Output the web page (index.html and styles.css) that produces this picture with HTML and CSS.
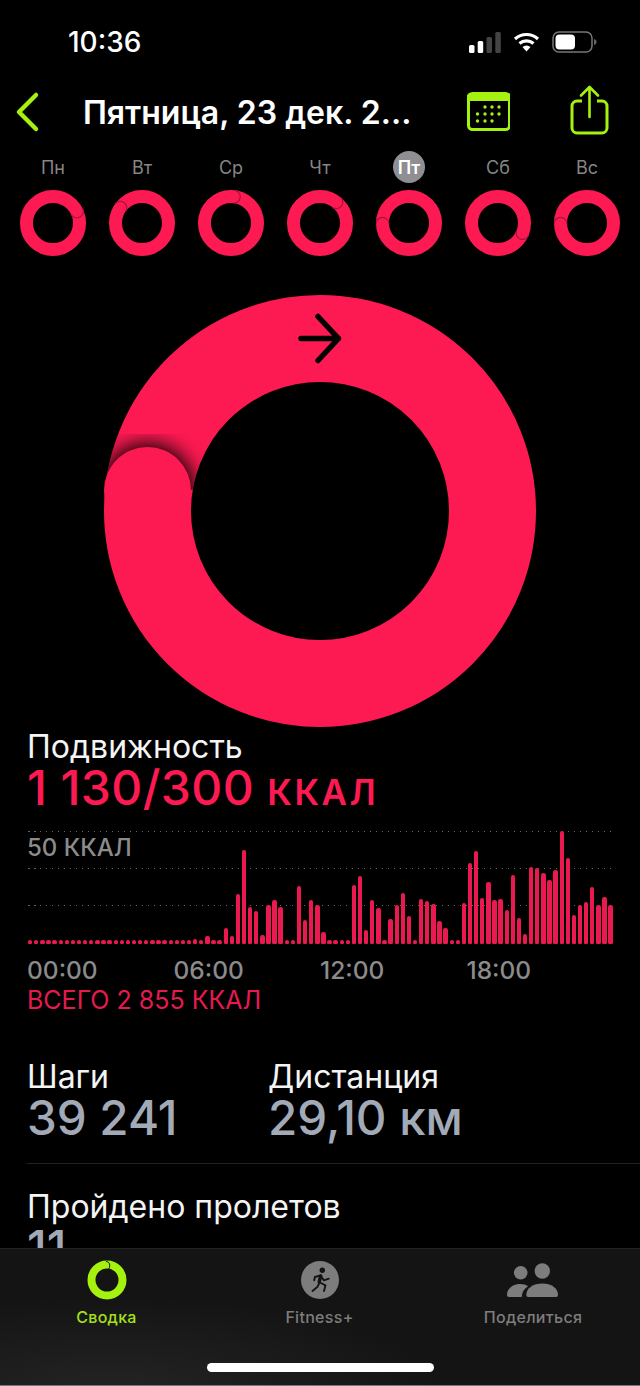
FILE: index.html
```html
<!DOCTYPE html>
<html lang="ru">
<head>
<meta charset="utf-8">
<title>Активность</title>
<link rel="stylesheet" href="styles.css">
</head>
<body>
<div class="screen">
  <header class="status">
    <span class="clock">10:36</span>
    <div class="status-icons">
      <svg width="32" height="21" viewBox="0 0 32 21"><rect x="0" y="13" width="5.500" height="8" rx="1.500" fill="#fff"/><rect x="8.700" y="9" width="5.500" height="12" rx="1.500" fill="#fff"/><rect x="17.500" y="5" width="5.500" height="16" rx="1.500" fill="#444"/><rect x="26.300" y="0" width="5.500" height="21" rx="1.500" fill="#444"/></svg>
      <svg width="27" height="20" viewBox="0 0 27 20"><path d="M13.500 19.500L9.500 15a6 6 0 0 1 8 0z" fill="#fff"/><path d="M6.500 11.500a10.500 10.500 0 0 1 14 0" fill="none" stroke="#fff" stroke-width="3.200"/><path d="M2 7a17 17 0 0 1 23 0" fill="none" stroke="#fff" stroke-width="3.200"/></svg>
      <svg width="45" height="22" viewBox="0 0 45 22"><rect x="1" y="1" width="39" height="20" rx="6" fill="none" stroke="#777" stroke-width="1.500"/><rect x="3.500" y="3.500" width="19.500" height="15" rx="4" fill="#fff"/><path d="M42 8c1.800.5 2.500 1.700 2.500 3s-.7 2.500-2.500 3z" fill="#666"/></svg>
    </div>
  </header>

  <nav class="nav">
    <svg class="back" width="26" height="42" viewBox="0 0 26 42"><path d="M21 4L4 21l17 17" fill="none" stroke="#a5f20f" stroke-width="4.500" stroke-linecap="round" stroke-linejoin="round"/></svg>
    <h1 class="title">Пятница, 23 дек. 2...</h1>
    <svg class="cal" width="44" height="40" viewBox="0 0 44 40"><rect x="2.500" y="1.500" width="41" height="36" rx="4" fill="none" stroke="#a5f20f" stroke-width="3"/><path d="M1 9V5a4 4 0 0 1 4-4h36a4 4 0 0 1 4 4v4z" fill="#a5f20f"/><g fill="#a5f20f"><circle cx="19" cy="15" r="1.700"/><circle cx="26" cy="15" r="1.700"/><circle cx="33" cy="15" r="1.700"/><circle cx="11.500" cy="22" r="1.700"/><circle cx="19" cy="22" r="1.700"/><circle cx="26" cy="22" r="1.700"/><circle cx="33" cy="22" r="1.700"/><circle cx="11.500" cy="29" r="1.700"/><circle cx="19" cy="29" r="1.700"/><circle cx="26" cy="29" r="1.700"/></g></svg>
    <svg class="share" width="40" height="50" viewBox="0 0 40 50"><path d="M12 16H7a5 5 0 0 0-5 5v22a5 5 0 0 0 5 5h25a5 5 0 0 0 5-5V21a5 5 0 0 0-5-5h-5" fill="none" stroke="#a5f20f" stroke-width="3"/><path d="M19.500 32V3M11 10.500L19.500 2 28 10.500" fill="none" stroke="#a5f20f" stroke-width="2.600" stroke-linecap="round" stroke-linejoin="round"/></svg>
  </nav>

  <section class="week">
    <div class="day"><span class="day-label">Пн</span><svg class="mini" width="66" height="66" viewBox="-33 -33 66 66"><circle class="mini-track" r="26.500"/><g transform="rotate(64)"><path class="mini-edge" d="M0-33a6.500 6.500 0 0 1 0 13"/></g></svg></div>
    <div class="day"><span class="day-label">Вт</span><svg class="mini" width="66" height="66" viewBox="-33 -33 66 66"><circle class="mini-track" r="26.500"/><g transform="rotate(-55)"><path class="mini-edge" d="M0-33a6.500 6.500 0 0 1 0 13"/></g></svg></div>
    <div class="day"><span class="day-label">Ср</span><svg class="mini" width="66" height="66" viewBox="-33 -33 66 66"><circle class="mini-track" r="26.500"/><g transform="rotate(6)"><path class="mini-edge" d="M0-33a6.500 6.500 0 0 1 0 13"/></g></svg></div>
    <div class="day"><span class="day-label">Чт</span><svg class="mini" width="66" height="66" viewBox="-33 -33 66 66"><circle class="mini-track" r="26.500"/><g transform="rotate(38)"><path class="mini-edge" d="M0-33a6.500 6.500 0 0 1 0 13"/></g></svg></div>
    <div class="day"><span class="day-label today">Пт</span><svg class="mini" width="66" height="66" viewBox="-33 -33 66 66"><circle class="mini-track" r="26.500"/><g transform="rotate(-92)"><path class="mini-edge" d="M0-33a6.500 6.500 0 0 1 0 13"/></g></svg></div>
    <div class="day"><span class="day-label">Сб</span><svg class="mini" width="66" height="66" viewBox="-33 -33 66 66"><circle class="mini-track" r="26.500"/><g transform="rotate(112)"><path class="mini-edge" d="M0-33a6.500 6.500 0 0 1 0 13"/></g></svg></div>
    <div class="day"><span class="day-label">Вс</span><svg class="mini" width="66" height="66" viewBox="-33 -33 66 66"><circle class="mini-track" r="26.500"/><g transform="rotate(-92)"><path class="mini-edge" d="M0-33a6.500 6.500 0 0 1 0 13"/></g></svg></div>
  </section>

  <section class="big-ring">
    <svg width="432" height="432" viewBox="-216 -216 432 432">
      <defs>
        <filter id="soft" x="-50%" y="-50%" width="200%" height="200%"><feGaussianBlur stdDeviation="10"/></filter>
        <mask id="ringmask"><circle r="172.500" fill="none" stroke="#fff" stroke-width="87"/></mask>
        <clipPath id="above"><rect x="-216" y="-120" width="100" height="99"/></clipPath>
      </defs>
      <circle class="big-track" r="172.500"/>
      <g mask="url(#ringmask)"><g clip-path="url(#above)">
        <circle cx="-172.500" cy="-20.500" r="47" fill="#000" filter="url(#soft)"/>
      </g></g>
      <circle class="big-head" cx="-172.500" cy="-20.500" r="43.500"/>
      <path class="big-arrow" d="M-19-172.500H18.500M-2-194.500L18.500-172.500-2-150.500"/>
    </svg>
  </section>

  <section class="move">
    <div class="label">Подвижность</div>
    <div class="move-value">1 130/300 <span class="unit">ККАЛ</span></div>
  </section>

  <section class="chart">
    <div class="grid"><i></i><i></i><i></i></div>
    <div class="chart-label">50 ККАЛ</div>
    <div class="bars">
      <b style="height:4px"></b><b style="height:4px"></b><b style="height:4px"></b><b style="height:4px"></b><b style="height:4px"></b><b style="height:4px"></b><b style="height:4px"></b><b style="height:4px"></b><b style="height:4px"></b><b style="height:4px"></b><b style="height:4px"></b><b style="height:4px"></b><b style="height:4px"></b><b style="height:4px"></b><b style="height:4px"></b><b style="height:4px"></b><b style="height:4px"></b><b style="height:4px"></b><b style="height:4px"></b><b style="height:4px"></b><b style="height:4px"></b><b style="height:4px"></b><b style="height:4px"></b><b style="height:4px"></b><b style="height:4px"></b><b style="height:4px"></b><b style="height:4px"></b><b style="height:5px"></b><b style="height:4px"></b><b style="height:8px"></b><b style="height:4px"></b><b style="height:4px"></b><b style="height:16px"></b><b style="height:8px"></b><b style="height:50px"></b><b style="height:94px"></b><b style="height:37px"></b><b style="height:33px"></b><b style="height:9px"></b><b style="height:39px"></b><b style="height:44px"></b><b style="height:37px"></b><b style="height:4px"></b><b style="height:4px"></b><b style="height:58px"></b><b style="height:24px"></b><b style="height:44px"></b><b style="height:39px"></b><b style="height:12px"></b><b style="height:4px"></b><b style="height:4px"></b><b style="height:4px"></b><b style="height:4px"></b><b style="height:59px"></b><b style="height:68px"></b><b style="height:14px"></b><b style="height:44px"></b><b style="height:36px"></b><b style="height:4px"></b><b style="height:25px"></b><b style="height:39px"></b><b style="height:51px"></b><b style="height:28px"></b><b style="height:4px"></b><b style="height:45px"></b><b style="height:43px"></b><b style="height:40px"></b><b style="height:23px"></b><b style="height:16px"></b><b style="height:4px"></b><b style="height:4px"></b><b style="height:41px"></b><b style="height:81px"></b><b style="height:93px"></b><b style="height:46px"></b><b style="height:62px"></b><b style="height:44px"></b><b style="height:45px"></b><b style="height:34px"></b><b style="height:69px"></b><b style="height:26px"></b><b style="height:10px"></b><b style="height:77px"></b><b style="height:76px"></b><b style="height:71px"></b><b style="height:64px"></b><b style="height:74px"></b><b style="height:113px"></b><b style="height:86px"></b><b style="height:29px"></b><b style="height:39px"></b><b style="height:42px"></b><b style="height:57px"></b><b style="height:39px"></b><b style="height:47px"></b><b style="height:39px"></b>
    </div>
    <div class="hours"><span>00:00</span><span>06:00</span><span>12:00</span><span>18:00</span></div>
    <div class="total">ВСЕГО 2 855 ККАЛ</div>
  </section>

  <section class="stats">
    <div class="stat"><div class="label">Шаги</div><div class="stat-value">39 241</div></div>
    <div class="stat"><div class="label">Дистанция</div><div class="stat-value">29,10 км</div></div>
  </section>

  <section class="flights">
    <div class="label">Пройдено пролетов</div>
    <div class="stat-value">11</div>
  </section>

  <footer class="tabbar">
    <div class="tabs">
      <div class="tab tab-on">
        <svg width="40" height="40" viewBox="0 0 40 40"><circle cx="20" cy="20" r="15.500" fill="none" stroke="#a5f20f" stroke-width="8"/><path d="M19 1.500a3.500 4 0 0 1 0 8.500" fill="none" stroke="#141414" stroke-width="1"/></svg>
        <span>Сводка</span>
      </div>
      <div class="tab">
        <svg width="40" height="40" viewBox="-1 -1 40 40"><circle cx="19" cy="19" r="19" fill="#7d7d7d"/><g fill="none" stroke="#141414" stroke-linecap="round" stroke-linejoin="round"><path stroke-width="3.400" d="M19.700 15L18.200 21"/><path stroke-width="1.900" d="M19.700 14.300L13.900 16 13.200 19.300M19.700 15L23 19.300 27.800 17.700M18 21L24.500 24.300 23 30M18 22.700L16.300 26 11.500 30"/></g><circle cx="21.300" cy="9.300" r="2.700" fill="#141414"/></svg>
        <span>Fitness+</span>
      </div>
      <div class="tab">
        <svg width="52" height="40" viewBox="0 -3 52 40"><g fill="#7d7d7d"><circle cx="13.700" cy="9.700" r="6.800"/><circle cx="35.300" cy="8" r="7.700"/><path d="M0 32c0-6.500 6-11 13-11 3.500 0 6 .8 8 2.300-4 2.700-6 6-6.300 10.700H2c-1.200 0-2-.8-2-2z"/><path d="M19.300 32c0-7 7-11.500 16-11.500S51 25 51 32c0 1.200-.8 2-2 2H21.300c-1.200 0-2-.8-2-2z"/></g></svg>
        <span>Поделиться</span>
      </div>
    </div>
    <div class="home"></div>
  </footer>
</div>
</body>
</html>
```
FILE: styles.css
```css
* { box-sizing: border-box; margin: 0; padding: 0; }
html, body { background: #000; }
body { width: 640px; height: 1386px; overflow: hidden; font-family: Inter, "Liberation Sans", sans-serif; color: #fff; }
.screen { position: relative; width: 640px; height: 1386px; overflow: hidden; background: #000; }

.status { height: 84px; display: flex; justify-content: space-between; align-items: center; padding: 0 43px 0 68px; }
.clock { font-size: 28px; font-weight: 500; }
.status-icons { display: flex; align-items: center; gap: 12px; }

.nav { height: 56px; display: flex; align-items: center; padding-left: 15px; }
.back { flex: none; }
.title { flex: none; width: 383px; margin-left: 42px; font-size: 32px; font-weight: 600; white-space: nowrap; }
.cal { flex: none; }
.share { flex: none; margin-left: 60px; margin-top: -4px; }

.week { display: flex; padding: 11px 0 0 20px; gap: 23px; height: 124px; }
.day { width: 66px; display: flex; flex-direction: column; align-items: center; }
.day-label { width: 32px; height: 32px; border-radius: 50%; display: flex; align-items: center; justify-content: center; font-size: 18px; color: #858585; }
.today { background: #8e8e93; color: #fff; font-weight: 600; }
.mini { margin-top: 7px; display: block; }
.mini-track { fill: none; stroke: #fd1a52; stroke-width: 13; }
.mini-edge { fill: none; stroke: #a8123c; stroke-width: 1.200; }

.big-ring { display: flex; justify-content: center; height: 432px; margin-top: 31px; }
.big-track { fill: none; stroke: #fd1a52; stroke-width: 87; }
.big-head { fill: #fd1a52; }
.big-arrow { fill: none; stroke: #000; stroke-width: 5.500; stroke-linecap: round; stroke-linejoin: round; }

.move { padding: 1px 27px 0; }
.label { font-size: 32px; line-height: 38px; color: #f4f4f4; white-space: nowrap; }
.move-value { font-size: 48px; line-height: 44px; font-weight: 500; letter-spacing: .4px; color: #fd1a52; white-space: nowrap; }
.unit { font-size: 35px; line-height: 1; font-weight: 600; letter-spacing: 2.500px; }

.chart { position: relative; margin: 9px 28px 0; width: 584px; height: 200px; }
.grid { position: absolute; left: 0; right: 0; top: 12px; display: flex; flex-direction: column; gap: 36px; }
.grid i { display: block; height: 1px; background: repeating-linear-gradient(90deg, #666 0 1.500px, transparent 1.500px 6px); }
.chart-label { position: absolute; left: -1px; top: 16px; font-size: 24px; font-weight: 500; line-height: 26px; color: #8b8b8b; }
.bars { position: absolute; left: 0; right: 0; top: 12px; height: 113px; display: flex; align-items: flex-end; gap: 1.750px; }
.bars b { flex: 1 1 0; border-radius: 2.200px 2.200px 1.500px 1.500px; background: #ea1a50; }
.hours { position: absolute; left: -1px; top: 136px; width: 600px; display: grid; grid-template-columns: repeat(4, 146.500px); font-size: 24.500px; line-height: 30px; font-weight: 500; color: #8b8b8b; }
.total { position: absolute; left: -1px; top: 166px; font-size: 25px; line-height: 30px; color: #e71a50; white-space: nowrap; }

.stats { display: flex; padding-left: 27px; margin-top: 39px; height: 105px; }
.stat { width: 241px; }
.stat-value { font-size: 47.500px; line-height: 44px; font-weight: 500; color: #a3aab7; white-space: nowrap; }

.flights { margin-left: 27px; border-top: 1px solid #222; padding-top: 24px; }

.tabbar { position: absolute; left: 0; right: 0; bottom: 0; height: 138px; background: radial-gradient(ellipse 340px 90px at 110px 138px, #232323, #141414); border-top: 1px solid #222; border-bottom: 1px solid #777; }
.tabs { display: grid; grid-template-columns: 213px 213px 214px; padding-top: 11px; }
.tab { display: flex; flex-direction: column; align-items: center; gap: 7px; font-size: 16px; font-weight: 500; color: #7d7d7d; letter-spacing: .3px; }
.tab svg { display: block; }
.tab-on { color: #a5e01a; }
.home { position: absolute; left: 207px; bottom: 13px; width: 227px; height: 9px; border-radius: 5px; background: #fff; }
```
